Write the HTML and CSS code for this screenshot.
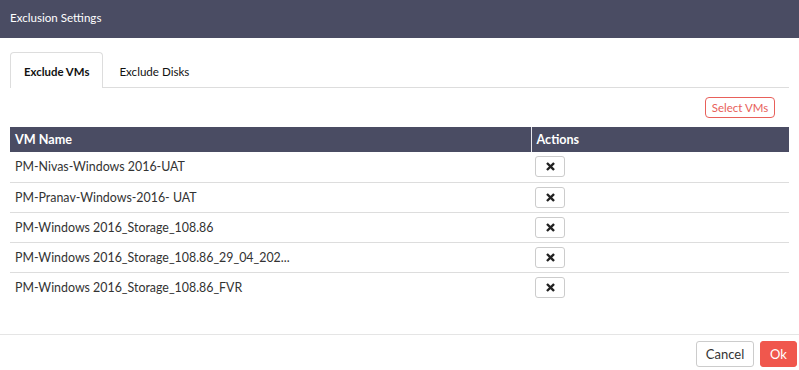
FILE: index.html
```html
<!DOCTYPE html>
<html>
<head>
<meta charset="utf-8">
<link rel="stylesheet" href="styles.css">
</head>
<body>
<div class="modal">
  <div class="modal-header">Exclusion Settings</div>
  <div class="modal-body">
    <ul class="tabs">
      <li class="tab active">Exclude VMs</li>
      <li class="tab">Exclude Disks</li>
    </ul>
    <div class="toolbar">
      <button class="btn-outline">Select VMs</button>
    </div>
    <table class="grid">
      <thead>
        <tr><th class="col-name">VM Name</th><th class="col-actions">Actions</th></tr>
      </thead>
      <tbody>
        <tr><td>PM-Nivas-Windows 2016-UAT</td><td class="act"><button class="btn-x"><svg width="9" height="9" viewBox="0 0 10 10"><path d="M2 2L8 8M8 2L2 8" stroke="#222" stroke-width="2.6" stroke-linecap="square"/></svg></button></td></tr>
        <tr><td>PM-Pranav-Windows-2016- UAT</td><td class="act"><button class="btn-x"><svg width="9" height="9" viewBox="0 0 10 10"><path d="M2 2L8 8M8 2L2 8" stroke="#222" stroke-width="2.6" stroke-linecap="square"/></svg></button></td></tr>
        <tr><td>PM-Windows 2016_Storage_108.86</td><td class="act"><button class="btn-x"><svg width="9" height="9" viewBox="0 0 10 10"><path d="M2 2L8 8M8 2L2 8" stroke="#222" stroke-width="2.6" stroke-linecap="square"/></svg></button></td></tr>
        <tr><td>PM-Windows 2016_Storage_108.86_29_04_202...</td><td class="act"><button class="btn-x"><svg width="9" height="9" viewBox="0 0 10 10"><path d="M2 2L8 8M8 2L2 8" stroke="#222" stroke-width="2.6" stroke-linecap="square"/></svg></button></td></tr>
        <tr><td>PM-Windows 2016_Storage_108.86_FVR</td><td class="act"><button class="btn-x"><svg width="9" height="9" viewBox="0 0 10 10"><path d="M2 2L8 8M8 2L2 8" stroke="#222" stroke-width="2.6" stroke-linecap="square"/></svg></button></td></tr>
      </tbody>
    </table>
  </div>
  <div class="modal-footer">
    <button class="btn-default">Cancel</button>
    <button class="btn-primary">Ok</button>
  </div>
</div>
</body>
</html>
```
FILE: styles.css
```css
* { box-sizing: border-box; }
html, body { margin: 0; padding: 0; background: #fff; }
body { font-family: Lato, "Open Sans", sans-serif; color: #333; width: 799px; height: 370px; overflow: hidden; }
.modal { display: flex; flex-direction: column; height: 370px; }
.modal-header {
  height: 38px; background: #4a4c63; color: #fff; font-size: 11.6px;
  display: flex; align-items: center; padding: 0 10px 4px;
}
.modal-body { padding: 14px 10px 0; height: 296px; }
.tabs {
  list-style: none; margin: 0; padding: 0; display: flex;
  border-bottom: 1px solid #ddd; height: 36px;
}
.tab {
  height: 36px; padding: 2px 13px 0; margin-right: 2px; font-size: 11.6px; color: #111;
  display: flex; align-items: center; border: 1px solid transparent; border-bottom: none;
  border-radius: 4px 4px 0 0;
}
.tab.active { border-color: #ddd; background: #fff; margin-bottom: -1px; padding-bottom: 1px; font-weight: 700; font-size: 11.4px; }
.toolbar { display: flex; justify-content: flex-end; padding-right: 14px; margin-top: 9px; }
.btn-outline {
  font-family: inherit; font-size: 11.5px; color: #e8605a; background: #fff;
  border: 1px solid #e8605a; border-radius: 4px; height: 21px; width: 70px; padding: 0;
}
.grid { width: 779px; border-collapse: collapse; margin-top: 9px; font-size: 12.4px; }
.grid th {
  background: #4a4c63; color: #fff; height: 25px; text-align: left; font-weight: 700;
  padding: 0 5px; font-size: 12.6px;
}
.grid th.col-name { width: 521px; border-right: 1px solid #e8e8ee; }
.grid td { height: 30px; padding: 0 5px; border-bottom: 1px solid #ddd; color: #333; vertical-align: middle; }
.grid tbody tr:last-child td { border-bottom: none; }
.grid td.act { padding: 0 4px; }
.btn-x {
  width: 30px; height: 21px; border: 1px solid #ccc; border-radius: 3px; background: #fff;
  display: flex; align-items: center; justify-content: center; padding: 0;
}
.modal-footer {
  border-top: 1px solid #e5e5e5; display: flex; justify-content: flex-end; gap: 6px;
  padding: 6px 2px 0 0; height: 36px;
}
.btn-default {
  font-family: inherit; font-size: 13px; color: #333; background: #fff; border: 1px solid #ccc;
  border-radius: 3px; height: 26px; width: 58px; padding: 0;
}
.btn-primary {
  font-family: inherit; font-size: 13px; color: #fff; background: #f0574d; border: 1px solid #f0574d;
  border-radius: 3px; height: 26px; width: 37px; padding: 0;
}
```
